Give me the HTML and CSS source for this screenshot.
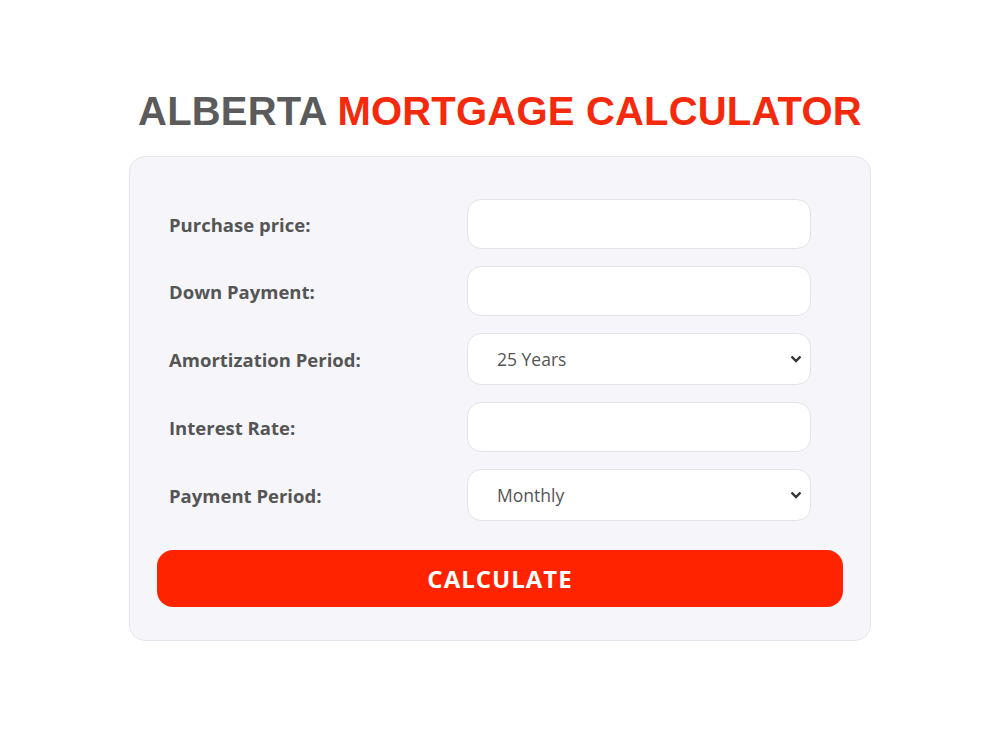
FILE: index.html
```html
<!doctype html>
<html lang="en">
<head>
    <meta charset="UTF-8">
    <title>Alberta Mortgage Calculator</title>
    <link rel="stylesheet" href="styles.css">
</head>
<body>
    <div class="calc">
        <h1 class="title"><span class="grey">ALBERTA</span> <span class="red">MORTGAGE CALCULATOR</span></h1>
        <form class="card" action="" novalidate>
            <div class="row">
                <label for="price">Purchase price:</label>
                <input id="price" type="text" name="price">
            </div>
            <div class="row">
                <label for="down">Down Payment:</label>
                <input id="down" type="text" name="down_payment">
            </div>
            <div class="row">
                <label for="amort">Amortization Period:</label>
                <select id="amort" name="amortization">
                    <option>5 Years</option>
                    <option>10 Years</option>
                    <option>15 Years</option>
                    <option>20 Years</option>
                    <option selected>25 Years</option>
                    <option>30 Years</option>
                </select>
            </div>
            <div class="row">
                <label for="rate">Interest Rate:</label>
                <input id="rate" type="text" name="interest_rate">
            </div>
            <div class="row">
                <label for="period">Payment Period:</label>
                <select id="period" name="payment_period">
                    <option selected>Monthly</option>
                    <option>Semi-Monthly</option>
                    <option>Bi-Weekly</option>
                    <option>Weekly</option>
                </select>
            </div>
            <button type="submit" class="btn">CALCULATE</button>
        </form>
    </div>
</body>
</html>
```

FILE: styles.css
```css
* {
    box-sizing: border-box;
}

body {
    margin: 0;
    background: #fff;
    font-family: "Open Sans", "Liberation Sans", sans-serif;
}

.calc {
    width: 742px;
    margin: 0 auto;
    padding-top: 88px;
}

.title {
    margin: 0 0 22px;
    text-align: center;
    font-family: "Liberation Sans", Arial, sans-serif;
    font-size: 40px;
    font-weight: 700;
    line-height: 46px;
    letter-spacing: 0.2px;
}

.grey {
    color: #5b5b5b;
}

.red {
    color: #f5290c;
}

.card {
    padding: 42px 27px 33px;
    border: 1px solid #e6e6ec;
    border-radius: 16px;
    background: #f6f6fa;
}

.row {
    display: grid;
    grid-template-columns: 298px 344px;
    align-items: center;
    padding-left: 12px;
    margin-bottom: 17px;
}

.row label {
    font-size: 18.5px;
    font-weight: 700;
    color: #555;
}

input,
select {
    width: 344px;
    height: 50px;
    padding: 0 29px;
    border: 1px solid #e2e2e8;
    border-radius: 14px;
    background: #fff;
    font-family: inherit;
    font-size: 17.5px;
    color: #555;
    outline: 0;
}

select {
    -webkit-appearance: none;
    appearance: none;
    height: 52px;
    background: #fff url("data:image/svg+xml;utf8,<svg xmlns='http://www.w3.org/2000/svg' width='12' height='8' viewBox='0 0 12 8'><path d='M1.5 1.5 6 6l4.5-4.5' fill='none' stroke='%23333' stroke-width='2.4'/></svg>") no-repeat right 8px center;
}

.btn {
    display: block;
    width: 100%;
    height: 57px;
    margin-top: 29px;
    border: 0;
    border-radius: 16px;
    background: #ff2300;
    color: #fff;
    font-family: inherit;
    font-size: 24px;
    font-weight: 700;
    letter-spacing: 1px;
}
```
